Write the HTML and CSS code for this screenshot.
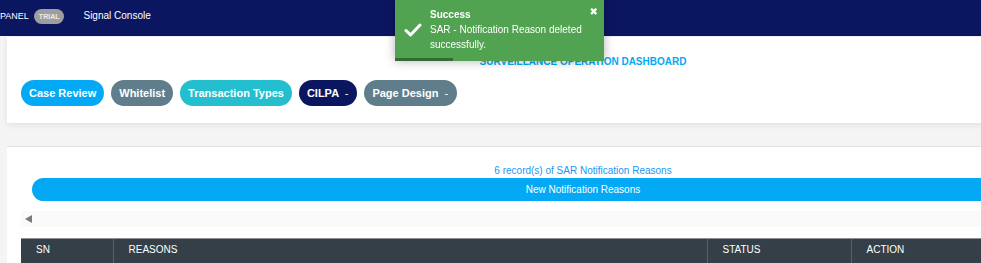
FILE: index.html
```html
<!DOCTYPE html>
<html lang="en">
<head>
    <meta charset="UTF-8">
    <title>SAR Notification Reasons</title>
    <link rel="stylesheet" href="styles.css">
</head>
<body>
    <header class="topbar">
        <span class="brand">PANEL</span>
        <span class="badge">TRIAL</span>
        <a class="nav-link" href="#">Signal Console</a>
    </header>

    <main class="content">
        <section class="card card-menu">
            <h2 class="dash-title">SURVEILLANCE OPERATION DASHBOARD</h2>
            <div class="menu-row">
                <button class="pill pill-blue">Case Review</button>
                <button class="pill pill-slate">Whitelist</button>
                <button class="pill pill-teal">Transaction Types</button>
                <button class="pill pill-navy">CILPA <span class="caret">-</span></button>
                <button class="pill pill-slate">Page Design <span class="caret">-</span></button>
            </div>
        </section>

        <section class="card card-list">
            <div class="record-count">6 record(s) of SAR Notification Reasons</div>
            <button class="new-btn">New Notification Reasons</button>
            <div class="scroll-strip"><span class="scroll-arrow"></span></div>
            <table class="data-table">
                <thead>
                    <tr>
                        <th class="col-sn">SN</th>
                        <th class="col-reason">REASONS</th>
                        <th class="col-status">STATUS</th>
                        <th class="col-action">ACTION</th>
                    </tr>
                </thead>
            </table>
        </section>
    </main>

    <!-- toast notification -->
    <div class="toast">
        <svg class="toast-icon" width="18" height="14" viewBox="0 0 18 14">
            <path d="M2 7.5 L6.5 12 L16 2" fill="none" stroke="#fff" stroke-width="3" stroke-linecap="round" stroke-linejoin="round"/>
        </svg>
        <span class="toast-close">&#10006;</span>
        <div class="toast-title">Success</div>
        <div class="toast-msg">SAR - Notification Reason deleted successfully.</div>
        <div class="toast-progress"></div>
    </div>
</body>
</html>
```

FILE: styles.css
```css
* {
    margin: 0;
    padding: 0;
    box-sizing: border-box;
    font-family: 'Liberation Sans', Arial, sans-serif;
}

body {
    background: #f4f4f4;
    overflow: hidden;
    width: 981px;
    height: 263px;
}

.topbar {
    height: 36px;
    background: #0b1660;
    display: flex;
    align-items: center;
    padding-bottom: 4px;
    color: #ffffff;
    font-size: 10px;
}

.brand {
    font-size: 9px;
    line-height: 14px;
}

.badge {
    margin-left: 5px;
    height: 15px;
    line-height: 15px;
    padding: 0 5px;
    border-radius: 8px;
    background: #9e9e9e;
    color: #ececec;
    font-size: 7px;
    font-weight: bold;
}

.nav-link {
    margin-left: 19px;
    color: #ffffff;
    text-decoration: none;
    line-height: 14px;
}

.content {
    padding-left: 7px;
    width: 1200px;
}

.card {
    width: 1152px;
    background: #ffffff;
    padding-left: 14px;
    padding-right: 14px;
}

.card-menu {
    margin-top: 1px;
    padding-top: 18px;
    padding-bottom: 17px;
    box-shadow: 0 2px 6px rgba(0, 0, 0, 0.08);
}

.dash-title {
    text-align: center;
    color: #03a9f4;
    font-size: 10px;
    font-weight: bold;
    line-height: 14px;
    margin-bottom: 11px;
}

.menu-row {
    display: flex;
    gap: 7px;
}

.pill {
    height: 26px;
    padding: 0 8px;
    border: none;
    border-radius: 13px;
    color: #ffffff;
    font-size: 11px;
    font-weight: bold;
}

.pill .caret {
    font-weight: normal;
    margin-left: 3px;
    margin-right: 1px;
}

.pill-blue {
    background: #03a9f4;
}

.pill-slate {
    background: #607d8b;
}

.pill-teal {
    background: #24bfcf;
}

.pill-navy {
    background: #0b1660;
}

.card-list {
    margin-top: 23px;
    border-top: 1px solid #e2e2e2;
    padding-top: 17px;
    height: 140px;
}

.record-count {
    text-align: center;
    color: #2196f3;
    font-size: 10px;
    line-height: 14px;
}

.new-btn {
    display: block;
    width: calc(100% - 22px);
    margin: 0 11px;
    height: 23px;
    border: none;
    border-radius: 12px;
    background: #03a9f4;
    color: #ffffff;
    font-size: 10px;
}

.scroll-strip {
    margin-top: 10px;
    height: 16px;
    background: #fafafa;
    display: flex;
    align-items: center;
    padding-left: 4px;
}

.scroll-arrow {
    width: 0;
    height: 0;
    border-top: 4px solid transparent;
    border-bottom: 4px solid transparent;
    border-right: 7px solid #7a7a7a;
}

.data-table {
    margin-top: 11px;
    width: 100%;
    border-collapse: collapse;
    table-layout: fixed;
}

.data-table th {
    background: #343f47;
    border-top: 1px solid #8a9096;
    color: #ffffff;
    font-size: 10px;
    font-weight: normal;
    text-align: left;
    line-height: 14px;
    padding: 4px 15px 8px;
}

.data-table th + th {
    border-left: 1px solid #56616a;
}

.col-sn {
    width: 92px;
}

.col-reason {
    width: 594px;
}

.col-status {
    width: 144px;
}

.toast {
    position: fixed;
    top: 0;
    left: 395px;
    width: 209px;
    height: 61px;
    background: #51a351;
    padding: 7px 15px 0 35px;
    color: #ffffff;
    font-size: 10px;
    line-height: 15px;
    box-shadow: 0 0 10px rgba(0, 0, 0, 0.3);
}

.toast-icon {
    position: absolute;
    left: 9px;
    top: 23px;
}

.toast-close {
    position: absolute;
    right: 6px;
    top: 6px;
    font-size: 10px;
    line-height: 12px;
    font-family: 'DejaVu Sans', sans-serif;
}

.toast-title {
    font-weight: bold;
}

.toast-progress {
    position: absolute;
    left: 0;
    bottom: 0;
    width: 58px;
    height: 3px;
    background: rgba(0, 0, 0, 0.35);
}
```
